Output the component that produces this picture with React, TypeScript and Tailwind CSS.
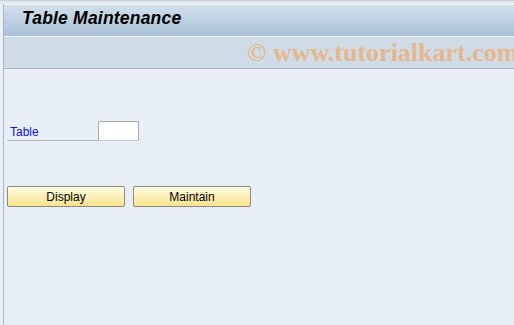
import React from 'react';

const App: React.FC = () => {
  return (
    <div className="w-[514px] h-[325px] bg-[#e9eff6] overflow-hidden" style={{ fontFamily: '"Liberation Sans", Arial, sans-serif' }}>
      {/* Top strip */}
      <div className="h-[4px] bg-[#e2e8ef] border-t border-[#c9d2dc]" />
      <div className="ml-[3px] border-l border-[#a7b6c6] h-[321px] flex flex-col">
        {/* Title bar */}
        <div className="h-[32px] border-t border-[#f4f8fb] bg-gradient-to-b from-[#d2e0ec] to-[#a9c1d9] flex items-center pl-[18px] pb-[4px]">
          <h1 className="text-[17.5px] font-bold italic text-black tracking-[0.2px]">Table Maintenance</h1>
        </div>
        {/* Toolbar / watermark */}
        <div className="h-[33px] border-t border-[#eef3f8] border-b border-b-[#a3b5c9] bg-[#cfdce7] flex items-center pl-[243px]">
          <span
            className="text-[26px] font-bold text-[#e6b78a] whitespace-nowrap"
            style={{ fontFamily: '"Liberation Serif", "DejaVu Serif", serif' }}
          >
            © www.tutorialkart.com
          </span>
        </div>
        {/* Content */}
        <div className="flex-1 pl-[3px] pt-[52px]">
          <div className="flex items-end h-[20px]">
            <div className="w-[91px] h-[20px] border-b border-[#b5b8bc] flex items-end pl-[3px] pb-[1px]">
              <span className="text-[12px] text-[#1010ee] leading-[14px]">Table</span>
            </div>
            <div className="w-[41px] h-[20px] bg-white border border-[#a9a9a9] border-b-[#c8c8c8]" />
          </div>
          <div className="flex gap-[8px] mt-[45px]">
            <button className="w-[118px] h-[21px] rounded-[2px] border border-[#8a8a82] bg-gradient-to-b from-[#fffbe0] to-[#fbe38d] text-[12px] text-black leading-none pt-[1px]">
              Display
            </button>
            <button className="w-[118px] h-[21px] rounded-[2px] border border-[#8a8a82] bg-gradient-to-b from-[#fffbe0] to-[#fbe38d] text-[12px] text-black leading-none pt-[1px]">
              Maintain
            </button>
          </div>
        </div>
      </div>
    </div>
  );
};

export default App;
